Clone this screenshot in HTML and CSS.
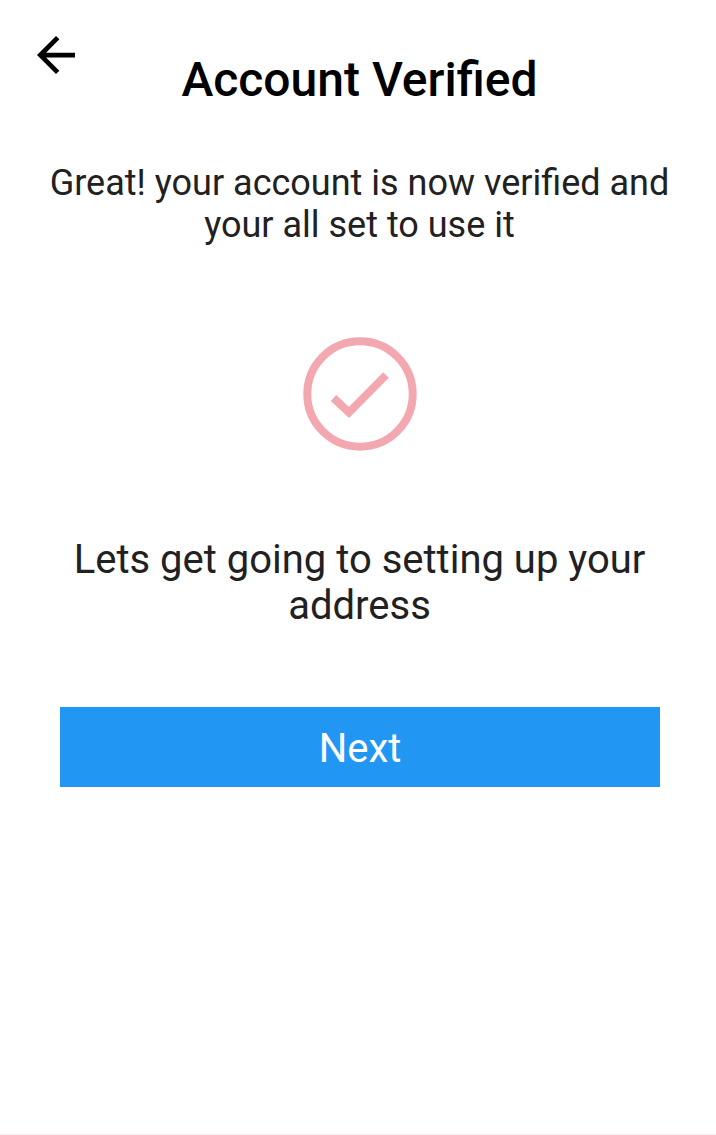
FILE: index.html
```html
<!DOCTYPE html>
<html lang="en">
<head>
<meta charset="utf-8">
<meta name="viewport" content="width=device-width, initial-scale=1">
<title>Account Verified</title>
<link rel="stylesheet" href="styles.css">
</head>
<body>
<main class="screen">
  <header class="header">
    <button class="back" type="button" aria-label="Back">
      <svg class="back-icon" viewBox="4 4 16 16" aria-hidden="true"><path d="M20 11H7.83l5.59-5.59L12 4l-8 8 8 8 1.41-1.41L7.83 13H20v-2z"/></svg>
    </button>
    <h1 class="title">Account Verified</h1>
  </header>
  <p class="message">Great! your account is now verified and your all set to use it</p>
  <svg class="check" viewBox="0 0 114 114" role="img" aria-label="Verified">
    <circle cx="57" cy="57" r="52.7"/>
    <path d="M30.5 61L46 75.5 83 38"/>
  </svg>
  <p class="prompt">Lets get going to setting up your address</p>
  <button class="next" type="button">Next</button>
</main>
</body>
</html>
```
FILE: styles.css
```css
* {
  box-sizing: border-box;
}

body {
  margin: 0;
  background: #fff;
  color: #212121;
  font-family: Roboto, sans-serif;
}

.screen {
  display: flex;
  flex-direction: column;
  align-items: center;
  min-height: 100vh;
  padding-left: 3px;
  border-bottom: 1px solid #f9edef;
}

.header {
  display: grid;
  grid-template-columns: 106px 1fr 106px;
  align-items: start;
  width: 100%;
  padding-top: 36px;
}

.back {
  justify-self: center;
  display: flex;
  padding: 0;
  border: 0;
  background: none;
}

.back-icon {
  width: 38px;
  height: 38px;
  fill: #000;
}

.title {
  margin: 16px 0 0;
  color: #000;
  font-size: 48px;
  font-weight: 500;
  line-height: 56px;
  text-align: center;
}

.message {
  margin: 54px 40px 0;
  font-size: 36px;
  line-height: 42px;
  text-align: center;
}

.check {
  width: 114px;
  height: 114px;
  margin: 91px 0 86px;
  fill: none;
  stroke: #f3a8b0;
  stroke-width: 8;
}

.prompt {
  margin: 0 60px;
  font-size: 40px;
  line-height: 46px;
  text-align: center;
}

.next {
  align-self: stretch;
  height: 80px;
  margin: 78px 56px 0 57px;
  padding: 2px 0 0;
  border: 0;
  background: #2196f3;
  color: #fff;
  font: 40px Roboto, sans-serif;
}
```
